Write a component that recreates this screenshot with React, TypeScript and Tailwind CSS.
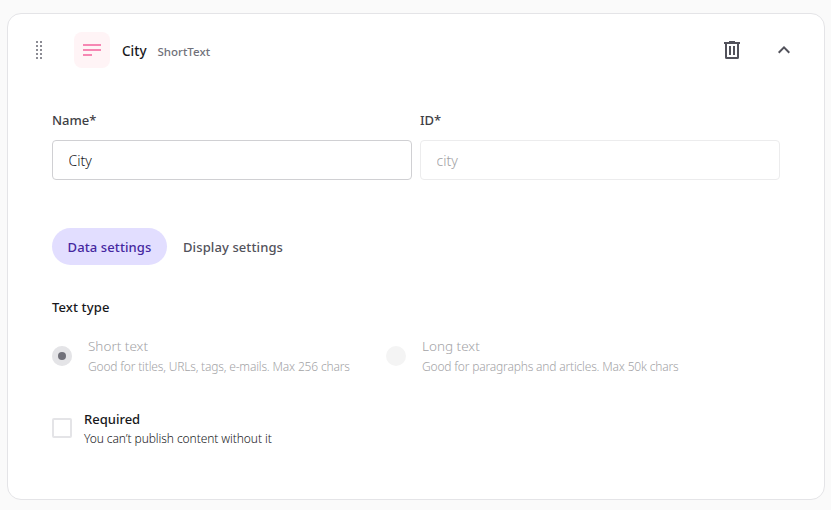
import type { ReactNode } from "react";

function Field({ label, value, disabled = false }: { label: string; value: string; disabled?: boolean }) {
  return (
    <label className="block w-[360px]">
      <span className="block h-5 text-[13px] leading-5 font-medium text-[#3f3f46]">{label}</span>
      <input
        readOnly
        value={value}
        disabled={disabled}
        className="mt-[10px] block h-10 w-full rounded border border-[#d0d0d3] bg-white pr-4 pl-[15.5px] pt-px text-[14px] font-light text-[#18181b] outline-none disabled:border-[#ececed] disabled:text-[#a1a1a3]"
      />
    </label>
  );
}

function Option({ title, hint, children }: { title: string; hint: string; children?: ReactNode }) {
  return (
    <div className="flex h-10 items-center gap-4">
      <span className="flex size-5 shrink-0 items-center justify-center rounded-full bg-[#f4f4f4]">{children}</span>
      <div className="whitespace-nowrap font-light text-[#a3a3a6]">
        <div className="h-[21px] text-[13.5px] leading-5">{title}</div>
        <div className="h-[19px] text-[12px] leading-5 tracking-[-0.175px]">{hint}</div>
      </div>
    </div>
  );
}

const dots = [0, 1, 2, 3, 4];

export default function App() {
  return (
    <main className="h-[510px] w-[831px] bg-[#fafafa] pt-[13px] pl-[7px] font-['Noto_Sans','Open_Sans',sans-serif]">
      <section className="h-[487px] w-[818px] rounded-[14px] border border-[#e4e4e7] bg-white">
        <header className="flex h-[72px] items-center pr-[34px] pl-7">
          <svg className="h-[18px] w-6 shrink-0" viewBox="0 0 24 18" fill="#8c8c94" shapeRendering="crispEdges">
            {dots.map((i) => (
              <g key={i}>
                <rect x="0" y={i * 4} width="2" height="2" />
                <rect x="4" y={i * 4} width="2" height="2" />
              </g>
            ))}
          </svg>
          <div className="ml-[14px] flex size-9 items-center justify-center rounded-lg bg-[#fff4f6]">
            <svg width="18" height="12" viewBox="0 0 18 12" fill="#f687b3" shapeRendering="crispEdges">
              <path d="M0 0h18v2H0zM0 5h18v2H0zM0 10h9v2H0z" />
            </svg>
          </div>
          <h2 className="ml-3 pt-[3px] text-[13.5px] font-medium text-[#18181b]">City</h2>
          <span className="ml-[11px] pt-[3px] text-[11.5px] font-medium text-[#71717a]">ShortText</span>
          <button className="ml-auto" aria-label="Delete">
            <svg width="16" height="18" viewBox="0 0 16 18" fill="#52525b">
              <path fillRule="evenodd" d="M5 0h6v1h5v2h-1v13.5a1.5 1.5 0 0 1-1.5 1.5h-11A1.5 1.5 0 0 1 1 16.5V3H0V1h5zM3 3v13h10V3zM5 5h2v9H5zM9 5h2v9H9z" />
            </svg>
          </button>
          <button className="ml-[38px] h-[8px]" aria-label="Collapse">
            <svg width="12" height="8" viewBox="0 0 12 8" fill="none" stroke="#52525b" strokeWidth="2">
              <path d="M.7 6.7 6 1.4l5.3 5.3" />
            </svg>
          </button>
        </header>

        <div className="pl-11">
          <div className="mt-6 flex gap-2">
            <Field label="Name*" value="City" />
            <Field label="ID*" value="city" disabled />
          </div>

          <nav className="mt-12 flex h-[37px] text-[13px] font-medium tracking-[0.1px]">
            <button className="w-[115px] rounded-full bg-[#e2deff] pt-0.5 text-[#4527a0]">Data settings</button>
            <button className="px-4 pt-0.5 text-[#52525b]">Display settings</button>
          </nav>

          <h3 className="mt-8 h-5 text-[13px] leading-5 font-medium tracking-[0.12px] text-[#18181b]">Text type</h3>

          <div className="mt-[19px] grid grid-cols-[334px_1fr]">
            <Option title="Short text" hint="Good for titles, URLs, tags, e-mails. Max 256 chars">
              <span className="flex size-5 items-center justify-center rounded-full bg-[#e4e4e7]">
                <span className="size-2 rounded-full bg-[#71717a]" />
              </span>
            </Option>
            <Option title="Long text" hint="Good for paragraphs and articles. Max 50k chars" />
          </div>

          <div className="mt-8 flex h-10 items-center gap-3">
            <span className="size-5 rounded-[2px] border-2 border-[#e4e4e7]" />
            <div className="whitespace-nowrap pt-px">
              <div className="h-5 text-[13px] leading-5 font-medium text-[#18181b]">Required</div>
              <div className="h-[19px] text-[12px] leading-5 font-light tracking-[-0.08px] text-[#18181b]">You can’t publish content without it</div>
            </div>
          </div>
        </div>
      </section>
    </main>
  );
}
